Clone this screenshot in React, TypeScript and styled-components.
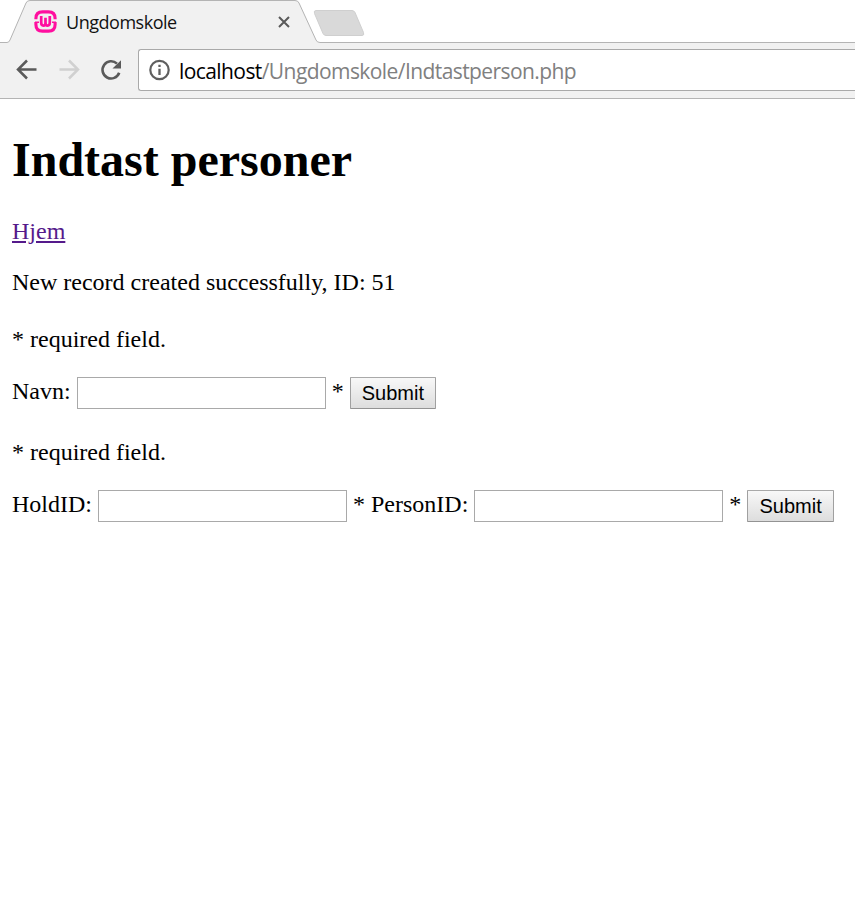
import React from "react";
import styled, { createGlobalStyle } from "styled-components";

const GlobalStyle = createGlobalStyle`
  * { box-sizing: border-box; }
  body {
    margin: 0;
    background: #fff;
    overflow: hidden;
  }
`;

const Window = styled.div`
  display: flex;
  flex-direction: column;
  width: 855px;
  height: 899px;
  overflow: hidden;
  background: #fff;
`;

const TabStrip = styled.div`
  position: relative;
  flex: none;
  height: 43px;
`;

const TabShapes = styled.svg`
  position: absolute;
  inset: 0;
`;

const Tab = styled.div`
  position: relative;
  display: flex;
  align-items: center;
  width: 318px;
  height: 43px;
  padding: 0 28px 0 34px;
`;

const TabTitle = styled.span`
  flex: 1;
  margin-left: 9px;
  font: 18px/24px "Open Sans", "Noto Sans", sans-serif;
  letter-spacing: -0.48px;
  color: #111;
`;

const IconButton = styled.button`
  display: flex;
  flex: none;
  padding: 0;
  border: 0;
  background: none;
`;

const Toolbar = styled.div`
  display: flex;
  flex: none;
  align-items: flex-start;
  height: 56px;
  padding: 6px 0 0 15px;
  background: #f1f1f1;
  border-bottom: 1px solid #b4b4b4;
`;

const NavButtons = styled.div`
  display: flex;
  align-items: center;
  gap: 18px;
  width: 123px;
  height: 42px;
`;

const AddressBar = styled.div`
  display: flex;
  flex: 1;
  align-items: center;
  height: 42px;
  padding-left: 9px;
  background: #fff;
  border: 1px solid #a9a9a9;
  border-right: 0;
  border-radius: 3px 0 0 3px;
`;

const Address = styled.span`
  margin-left: 8px;
  padding-top: 1px;
  font: 21px/28px "Open Sans", "Noto Sans", sans-serif;
  letter-spacing: -0.58px;
  white-space: nowrap;
  color: #808080;
`;

const Host = styled.span`
  color: #000;
`;

const Page = styled.main`
  flex: 1;
  padding: 34px 12px 0;
  font: 24px/28px "Liberation Serif", "Times New Roman", serif;
  color: #000;
`;

const Heading = styled.h1`
  margin: 0 0 30px;
  font-size: 48px;
  line-height: 54px;
  font-weight: bold;
`;

const HomeLink = styled.a`
  display: block;
  width: fit-content;
  color: #551a8b;
  text-decoration: underline;
`;

const Paragraph = styled.p<{ $top: number }>`
  margin: ${({ $top }) => $top}px 0 0;
`;

const FormRow = styled.form`
  display: flex;
  align-items: flex-start;
  gap: 6px;
  height: 32px;
  margin-top: 24px;
  white-space: nowrap;
`;

const TextInput = styled.input`
  flex: none;
  width: 249px;
  height: 32px;
  padding: 2px;
  border: 1px solid #a9a9a9;
  border-radius: 0;
  background: #fff;
  font: 20px "Liberation Sans", Arial, sans-serif;
`;

const SubmitButton = styled.button`
  flex: none;
  width: 86.5px;
  height: 32px;
  padding: 0;
  border: 1px solid;
  border-color: #a9a9a9 #a0a0a0 #939393 #a0a0a0;
  border-radius: 1px;
  background: linear-gradient(#f8f8f8, #dddddd);
  font: 20px/28px "Liberation Sans", Arial, sans-serif;
  color: #000;
`;

const TabOutline = () => (
  <TabShapes width="855" height="43" viewBox="0 0 855 43" fill="none">
    <path d="M0 43V42.5H7Q9 42.5 10 40L26 3Q27 .5 30 .5H295Q298 .5 299 3L316 40Q317 42.5 320 42.5H855V43Z" fill="#f1f1f1" />
    <path d="M0 42.5H7Q9 42.5 10 40L26 3Q27 .5 30 .5H295Q298 .5 299 3L316 40Q317 42.5 320 42.5H855" stroke="#b4b4b4" />
    <path d="M316 10.5H352Q354 10.5 355 12.5L363.5 32.5Q364.5 35.5 362 35.5H326Q324 35.5 323 33.5L314.5 13.5Q313.5 10.5 316 10.5Z" fill="#d9d9d9" stroke="#cfcfcf" />
  </TabShapes>
);

const Favicon = () => (
  <svg width="23" height="23" viewBox="0 0 23 23" fill="none" stroke="#ff0f9f">
    <path d="M1.9 9.3V8.5Q1.9 1.9 8.5 1.9H14.5Q21.1 1.9 21.1 8.5V9.3M1.9 12V14.5Q1.9 21.1 8.5 21.1H14.5Q21.1 21.1 21.1 14.5V12" strokeWidth="3.1" />
    <path d="M1 12.3H5M18 12.3H22" strokeWidth="1.5" />
    <path d="M7.2 6V12.6Q7.2 15.6 9.3 15.6Q11.5 15.6 11.5 13V7.8V13Q11.5 15.6 13.7 15.6Q15.8 15.6 15.8 12.6V6" strokeWidth="2.7" />
  </svg>
);

const CloseIcon = () => (
  <svg width="12" height="12" viewBox="0 0 12 12" stroke="#5a5a5a" strokeWidth="2">
    <path d="M1 1L11 11M11 1L1 11" />
  </svg>
);

const ArrowIcon = ({ forward = false }: { forward?: boolean }) => (
  <svg width="24" height="24" viewBox="0 0 24 24" fill="none" stroke={forward ? "#d0d0d0" : "#5a5a5a"} strokeWidth="2.5">
    <path d={forward ? "M2.5 11.5H21M12 2.5L21 11.5L12 20.5" : "M21.5 11.5H3M12 2.5L3 11.5L12 20.5"} />
  </svg>
);

const ReloadIcon = () => (
  <svg width="24" height="24" viewBox="0 0 24 24" fill="none">
    <path d="M18 5.6A8.6 8.6 0 1 0 20.2 14.8" stroke="#5a5a5a" strokeWidth="2.6" />
    <path d="M22 2.2V10.5H13.5Z" fill="#5a5a5a" />
  </svg>
);

const InfoIcon = () => (
  <svg width="23" height="22" viewBox="0 0 23 22" fill="none">
    <circle cx="11.5" cy="11" r="9.2" stroke="#5f5f5f" strokeWidth="2.2" />
    <path d="M11.5 5.8V8M11.5 9.8V16" stroke="#5f5f5f" strokeWidth="2.3" />
  </svg>
);

export default function App() {
  return (
    <Window>
      <GlobalStyle />
      <TabStrip>
        <TabOutline />
        <Tab>
          <Favicon />
          <TabTitle>Ungdomskole</TabTitle>
          <IconButton aria-label="Close tab">
            <CloseIcon />
          </IconButton>
        </Tab>
      </TabStrip>
      <Toolbar>
        <NavButtons>
          <IconButton aria-label="Back">
            <ArrowIcon />
          </IconButton>
          <IconButton aria-label="Forward">
            <ArrowIcon forward />
          </IconButton>
          <IconButton aria-label="Reload">
            <ReloadIcon />
          </IconButton>
        </NavButtons>
        <AddressBar>
          <InfoIcon />
          <Address>
            <Host>localhost</Host>/Ungdomskole/Indtastperson.php
          </Address>
        </AddressBar>
      </Toolbar>
      <Page>
        <Heading>Indtast personer</Heading>
        <HomeLink href="#">Hjem</HomeLink>
        <Paragraph $top={23}>New record created successfully, ID: 51</Paragraph>
        <Paragraph $top={29}>* required field.</Paragraph>
        <FormRow>
          <label htmlFor="navn">Navn:</label>
          <TextInput id="navn" />
          <span>*</span>
          <SubmitButton type="button">Submit</SubmitButton>
        </FormRow>
        <Paragraph $top={29}>* required field.</Paragraph>
        <FormRow>
          <label htmlFor="hold">HoldID:</label>
          <TextInput id="hold" />
          <span>*</span>
          <label htmlFor="person">PersonID:</label>
          <TextInput id="person" />
          <span>*</span>
          <SubmitButton type="button">Submit</SubmitButton>
        </FormRow>
      </Page>
    </Window>
  );
}
